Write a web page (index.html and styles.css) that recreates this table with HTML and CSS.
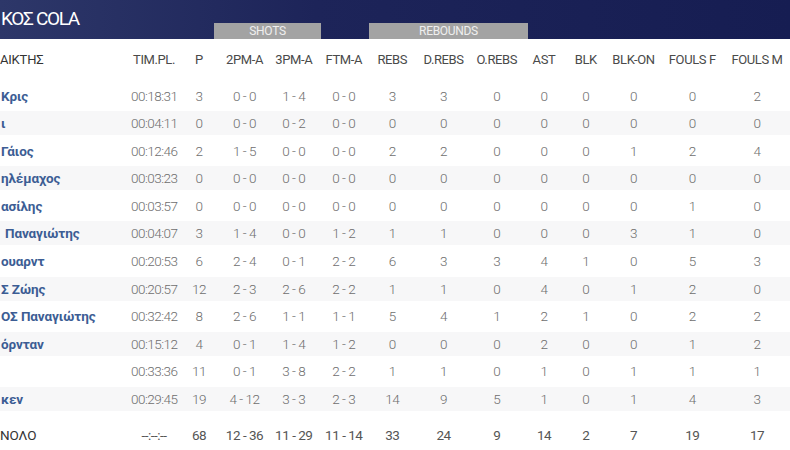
FILE: index.html
```html
<!DOCTYPE html>
<html lang="el">
<head>
<meta charset="utf-8">
<title>Box score</title>
<link rel="stylesheet" href="styles.css">
</head>
<body>
<div class="board">
  <div class="topbar">
    <div class="title">ΚΟΣ COLA</div>
    <div class="tab tab-shots">SHOTS</div>
    <div class="tab-gap"></div>
    <div class="tab tab-reb">REBOUNDS</div>
  </div>

  <div class="row head">
    <div class="name">ΑΙΚΤΗΣ</div>
    <div>TIM.PL.</div><div>P</div><div>2PM-A</div><div>3PM-A</div><div>FTM-A</div>
    <div>REBS</div><div>D.REBS</div><div>O.REBS</div><div>AST</div><div>BLK</div>
    <div>BLK-ON</div><div>FOULS F</div><div>FOULS M</div>
  </div>

  <div class="rows">
    <div class="row"><div class="name">Κρις</div><div>00:18:31</div><div>3</div><div>0 - 0</div><div>1 - 4</div><div>0 - 0</div><div>3</div><div>3</div><div>0</div><div>0</div><div>0</div><div>0</div><div>0</div><div>2</div></div>
    <div class="row alt"><div class="name">ι</div><div>00:04:11</div><div>0</div><div>0 - 0</div><div>0 - 2</div><div>0 - 0</div><div>0</div><div>0</div><div>0</div><div>0</div><div>0</div><div>0</div><div>0</div><div>0</div></div>
    <div class="row"><div class="name">Γάιος</div><div>00:12:46</div><div>2</div><div>1 - 5</div><div>0 - 0</div><div>0 - 0</div><div>2</div><div>2</div><div>0</div><div>0</div><div>0</div><div>1</div><div>2</div><div>4</div></div>
    <div class="row alt"><div class="name">ηλέμαχος</div><div>00:03:23</div><div>0</div><div>0 - 0</div><div>0 - 0</div><div>0 - 0</div><div>0</div><div>0</div><div>0</div><div>0</div><div>0</div><div>0</div><div>0</div><div>0</div></div>
    <div class="row"><div class="name">ασίλης</div><div>00:03:57</div><div>0</div><div>0 - 0</div><div>0 - 0</div><div>0 - 0</div><div>0</div><div>0</div><div>0</div><div>0</div><div>0</div><div>0</div><div>1</div><div>0</div></div>
    <div class="row alt"><div class="name name-sp">Παναγιώτης</div><div>00:04:07</div><div>3</div><div>1 - 4</div><div>0 - 0</div><div>1 - 2</div><div>1</div><div>1</div><div>0</div><div>0</div><div>0</div><div>3</div><div>1</div><div>0</div></div>
    <div class="row"><div class="name">ουαρντ</div><div>00:20:53</div><div>6</div><div>2 - 4</div><div>0 - 1</div><div>2 - 2</div><div>6</div><div>3</div><div>3</div><div>4</div><div>1</div><div>0</div><div>5</div><div>3</div></div>
    <div class="row alt"><div class="name">Σ Ζώης</div><div>00:20:57</div><div>12</div><div>2 - 3</div><div>2 - 6</div><div>2 - 2</div><div>1</div><div>1</div><div>0</div><div>4</div><div>0</div><div>1</div><div>2</div><div>0</div></div>
    <div class="row"><div class="name">ΟΣ Παναγιώτης</div><div>00:32:42</div><div>8</div><div>2 - 6</div><div>1 - 1</div><div>1 - 1</div><div>5</div><div>4</div><div>1</div><div>2</div><div>1</div><div>0</div><div>2</div><div>2</div></div>
    <div class="row alt"><div class="name">όρνταν</div><div>00:15:12</div><div>4</div><div>0 - 1</div><div>1 - 4</div><div>1 - 2</div><div>0</div><div>0</div><div>0</div><div>2</div><div>0</div><div>0</div><div>1</div><div>2</div></div>
    <div class="row"><div class="name"></div><div>00:33:36</div><div>11</div><div>0 - 1</div><div>3 - 8</div><div>2 - 2</div><div>1</div><div>1</div><div>0</div><div>1</div><div>0</div><div>1</div><div>1</div><div>1</div></div>
    <div class="row alt"><div class="name">κεν</div><div>00:29:45</div><div>19</div><div>4 - 12</div><div>3 - 3</div><div>2 - 3</div><div>14</div><div>9</div><div>5</div><div>1</div><div>0</div><div>1</div><div>4</div><div>3</div></div>
  </div>

  <div class="row total">
    <div class="name">ΝΟΛΟ</div><div>--:--:--</div><div>68</div><div>12 - 36</div><div>11 - 29</div><div>11 - 14</div><div>33</div><div>24</div><div>9</div><div>14</div><div>2</div><div>7</div><div>19</div><div>17</div>
  </div>
</div>
</body>
</html>
```

FILE: styles.css
```css
html, body {
  margin: 0;
  padding: 0;
  background: #ffffff;
}
body {
  width: 790px;
  height: 450px;
  overflow: hidden;
  font-family: Roboto, "Noto Sans", sans-serif;
}
.board {
  width: 790px;
}
.topbar {
  height: 39px;
  background: linear-gradient(90deg, #2d3769 0%, #1d2459 40%, #161d52 100%);
  display: grid;
  grid-template-columns: 214px 107px 48px 159px 1fr;
  align-items: end;
}
.title {
  align-self: center;
  color: #ffffff;
  font-size: 19px;
  letter-spacing: -1.3px;
  padding-left: 1px;
  padding-bottom: 2px;
  white-space: nowrap;
}
.tab {
  height: 16px;
  background: #a3a3a3;
  color: #efefef;
  font-size: 12px;
  line-height: 16px;
  text-align: center;
  letter-spacing: -0.3px;
}
.row {
  display: grid;
  grid-template-columns: 131px 46px 44px 47px 51.5px 48.5px 48.5px 54px 52.5px 42px 41.5px 54px 63.5px 66px;
  height: 24px;
  line-height: 24px;
  font-size: 13.5px;
  font-weight: 300;
  color: #6e6e6e;
  letter-spacing: -0.5px;
  text-align: center;
  white-space: nowrap;
}
.row .name {
  text-align: left;
  padding-left: 1px;
  font-weight: 700;
  color: #3c5d94;
  font-size: 13.5px;
  letter-spacing: -0.1px;
}
.row .name-sp {
  padding-left: 5px;
}
.head {
  height: 41px;
  line-height: 42px;
  font-weight: 400;
  color: #4a4a4a;
  font-size: 13px;
  letter-spacing: -0.4px;
}
.head .name {
  font-weight: 400;
  color: #333333;
  font-size: 13px;
  letter-spacing: -0.2px;
  padding-left: 0;
}
.rows {
  display: flex;
  flex-direction: column;
  gap: 3.6px;
  padding-top: 3.5px;
}
.alt {
  background: #f7f7f8;
}
.total {
  margin-top: 8px;
  height: 32px;
  line-height: 32px;
  font-weight: 400;
  color: #555555;
}
.total .name {
  font-weight: 400;
  color: #333333;
  padding-left: 0;
}
```
